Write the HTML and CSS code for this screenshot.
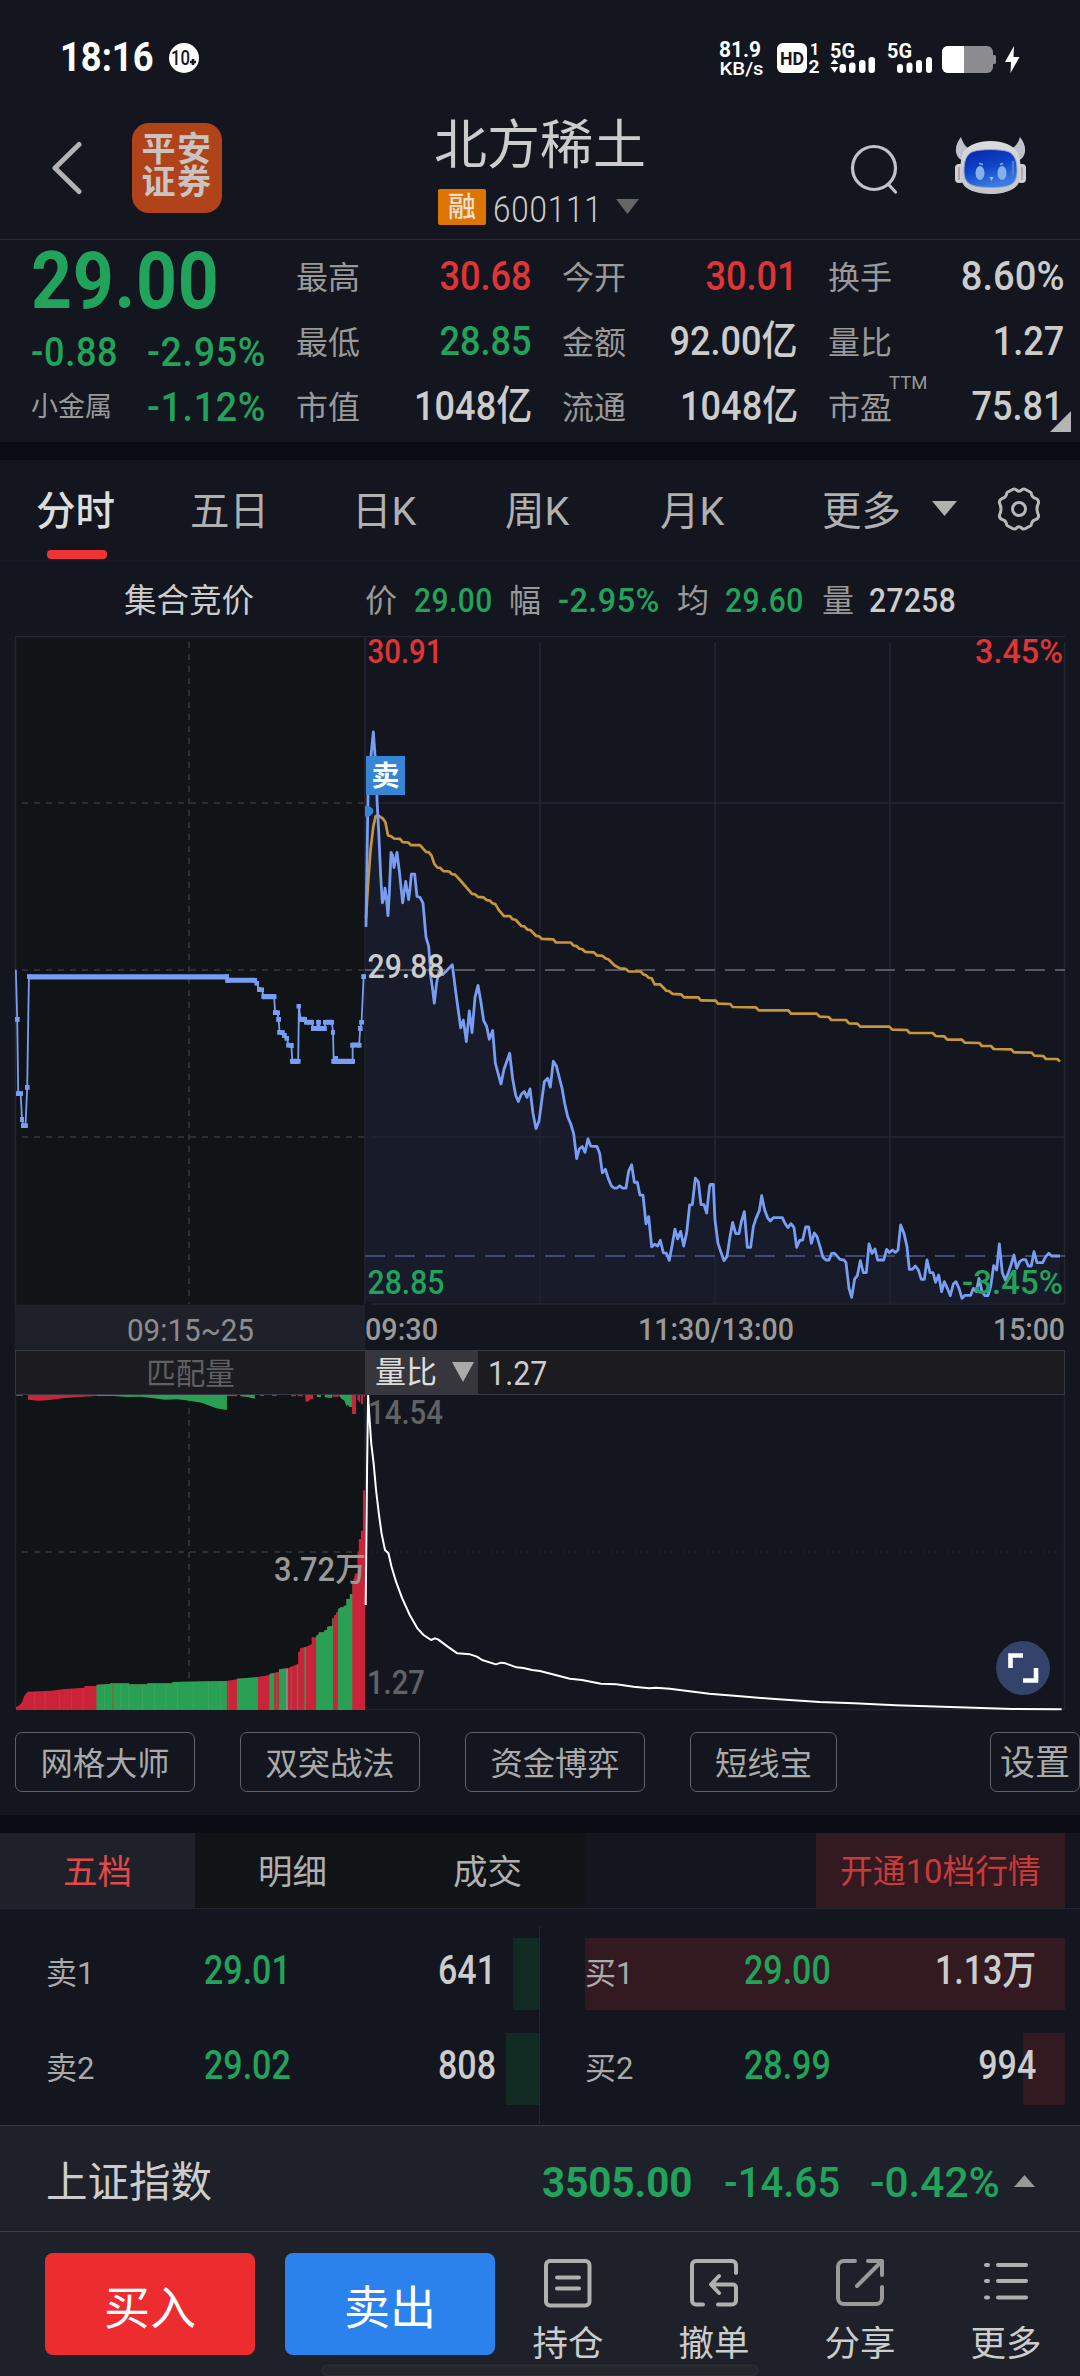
FILE: index.html
```html
<!DOCTYPE html>
<html lang="zh-CN">
<head>
<meta charset="utf-8">
<title>北方稀土 600111</title>
<link rel="stylesheet" href="styles.css">
</head>
<body>
<div class="status">
  <span class="clock">18:16</span>
  <svg class="badge10" width="30" height="30" viewBox="0 0 30 30"><circle cx="15" cy="15" r="15" fill="#fff"/><text x="2" y="22" font-size="20" font-weight="500" textLength="19" lengthAdjust="spacingAndGlyphs" fill="#13161f">10</text><path d="M24 16v6M21 19h6" stroke="#13161f" stroke-width="2.6"/></svg>
  <svg class="sysicons" width="310" height="44" viewBox="714 36 310 44" fill="#fff">
    <g font-weight="700">
      <text x="719" y="57" font-size="22.500" textLength="42" lengthAdjust="spacingAndGlyphs">81.9</text>
      <text x="719.500" y="75" font-size="19" font-weight="500" textLength="44" lengthAdjust="spacingAndGlyphs">KB/s</text>
      <text x="830" y="58" font-size="20.500" textLength="25" lengthAdjust="spacingAndGlyphs">5G</text>
      <text x="887" y="58" font-size="20.500" textLength="25" lengthAdjust="spacingAndGlyphs">5G</text>
      <text x="810" y="55" font-size="16">1</text>
      <text x="808.500" y="72.500" font-size="17.500" textLength="11" lengthAdjust="spacingAndGlyphs">2</text>
    </g>
    <rect x="777" y="43" width="30" height="30" rx="6"/>
    <text x="780" y="65" font-size="19" font-weight="700" fill="#13161f" textLength="24" lengthAdjust="spacingAndGlyphs">HD</text>
    <g>
      <path d="M830.500 64l4-5 4 5zM830.500 67h8l-4 5.500z"/>
      <rect x="839.500" y="64" width="6.500" height="9" rx="3"/><rect x="849" y="62.500" width="6.500" height="10.500" rx="3"/><rect x="859" y="60" width="6.500" height="13" rx="3"/><rect x="868.500" y="57" width="6.500" height="16" rx="3"/>
      <rect x="897" y="64" width="6" height="9" rx="3"/><rect x="906.500" y="62.500" width="6" height="10.500" rx="3"/><rect x="916" y="60" width="6" height="13" rx="3"/><rect x="926" y="57" width="6" height="16" rx="3"/>
    </g>
    <rect x="942" y="46" width="51" height="27" rx="6" fill="#8b8b90"/><rect x="992" y="55" width="4" height="9" rx="1.500" fill="#8b8b90"/>
    <path d="M948 46h16v27h-16a6 6 0 0 1-6-6v-15a6 6 0 0 1 6-6z"/>
    <path d="M1014 46l-9 16h6l-.5 11 9-16h-6z"/>
  </svg>
</div>

<header class="head">
  <div class="head-left">
    <svg width="32" height="56" viewBox="50 140 32 56" fill="none" stroke="#b3b3b3" stroke-width="5" stroke-linecap="round" stroke-linejoin="round"><path d="M79 144.500L55 168l24 23.500"/></svg>
    <div class="logo">平安<br>证券</div>
  </div>
  <div class="head-title">
    <h1>北方稀土</h1>
    <div class="code"><b>融</b><span>600111</span><svg width="23" height="15" viewBox="0 0 23 15"><path d="M0 0h23L11.500 15z" fill="#666"/></svg></div>
  </div>
  <div class="head-right">
    <svg width="50" height="52" viewBox="849 143 50 52" fill="none" stroke="#c0c3ca" stroke-width="3.200" stroke-linecap="round"><circle cx="874" cy="168" r="21.500"/><path d="M889 185l6.500 7"/></svg>
    <svg class="robot" width="74" height="60" viewBox="0 0 74 60">
      <defs><linearGradient id="face" x1="0" y1="0" x2=".4" y2="1"><stop offset="0" stop-color="#0b22a8"/><stop offset=".55" stop-color="#0d46c8"/><stop offset="1" stop-color="#3b7be0"/></linearGradient>
      <linearGradient id="shell" x1="0" y1="0" x2="0" y2="1"><stop offset="0" stop-color="#dcdcdd"/><stop offset="1" stop-color="#c3c4c8"/></linearGradient></defs>
      <path d="M7 1C2 7 0 15 4 21c2 3 5 4 8 3l8-9C13 13 9 8 7 1zM66 1c5 6 7 14 3 20-2 3-5 4-8 3l-8-9c7-2 11-7 13-14z" fill="#bfc2cd"/>
      <rect x="1" y="28" width="9" height="19" rx="4" fill="#d0cfd2"/><rect x="63" y="28" width="9" height="19" rx="4" fill="#d0cfd2"/>
      <path d="M5 31v13M68 31v13" stroke="#a08a8c" stroke-width="1.200"/>
      <path d="M9 17C17 1 56 1 64 17c3 9 4 20 1 29-5 16-52 16-57 0-3-9-2-20 1-29z" fill="url(#shell)"/>
      <path d="M19 15.500c8-2.500 27-2.500 35 0 7 3 9 10 9 19 0 13-5 17-26 17s-27-4-27-17c0-9 2-16 9-19z" fill="url(#face)" stroke="#8fa6cf" stroke-width="1"/>
      <ellipse cx="26" cy="37" rx="4.500" ry="7" fill="#86b0ea"/><ellipse cx="48" cy="37" rx="4.500" ry="7" fill="#86b0ea"/>
      <path d="M35.500 41h4l-2 4z" fill="#9cc0ee"/><path d="M25 27.500l4 1M46 28.500l3-1" stroke="#86b0ea" stroke-width="1.500"/><path d="M59 25v14" stroke="#5a78d0" stroke-width="2"/>
    </svg>
  </div>
</header>

<section class="quote">
  <div class="price">
    <div class="last down"><span class="n">29.00</span></div>
    <div class="chg down"><span class="n">-0.88</span><span class="n pct">-2.95%</span></div>
    <div class="chg sector"><span>小金属</span><span class="n pct down">-1.12%</span></div>
  </div>
  <dl class="stats">
    <div><dt>最高</dt><dd class="up">30.68</dd></div><div><dt>今开</dt><dd class="up">30.01</dd></div><div><dt>换手</dt><dd class="pct">8.60%</dd></div>
    <div><dt>最低</dt><dd class="down">28.85</dd></div><div><dt>金额</dt><dd>92.00亿</dd></div><div><dt>量比</dt><dd>1.27</dd></div>
    <div><dt>市值</dt><dd>1048亿</dd></div><div><dt>流通</dt><dd>1048亿</dd></div><div><dt>市盈<sup>TTM</sup></dt><dd>75.81</dd></div>
  </dl>
  <svg class="corner" width="21" height="21"><path d="M21 0v21H0z" fill="#b5b5b5"/></svg>
</section>

<nav class="tabs">
  <a class="on">分时</a><a>五日</a><a>日K</a><a>周K</a><a>月K</a><a>更多</a>
  <svg width="25" height="15" viewBox="0 0 25 15"><path d="M0 0h25L12.500 15z" fill="#b0b0b0"/></svg>
  <svg width="44" height="46" viewBox="-22 -23 44 46" fill="none" stroke="#b8b8b8" stroke-width="3" stroke-linejoin="round"><path d="M-6.500 -19.500Q-4 -21 -2 -18.500Q0 -17 2 -18.500Q4 -21 6.500 -19.500L12 -16.500Q13 -11 17 -10.500Q20 -9 19.500 -6Q16.500 0 19.500 6Q20 9 17 10.500Q13 11 12 16.500L6.500 19.500Q4 21 2 18.500Q0 17 -2 18.500Q-4 21 -6.500 19.500L-12 16.500Q-13 11 -17 10.500Q-20 9 -19.500 6Q-16.500 0 -19.500 -6Q-20 -9 -17 -10.500Q-13 -11 -12 -16.500Z"/><circle r="6.500"/></svg>
</nav>

<div class="info">
  <strong>集合竞价</strong>
  <span>价</span><b class="down">29.00</b><span>幅</span><b class="down pct">-2.95%</b><span>均</span><b class="down">29.60</b><span>量</span><b>27258</b>
</div>

<svg class="chart" width="1080" height="714" viewBox="0 636 1080 714">
  <defs>
    <marker id="tick" markerUnits="userSpaceOnUse" markerWidth="14" markerHeight="11" refX="7" refY="5.500"><rect width="14" height="11" fill="#789df2"/></marker>
  </defs>
  <rect x="16" y="637" width="348" height="667" fill="#101417"/>
  <g fill="none" stroke="#242732" stroke-width="1.500">
    <path d="M15.500 1350V636.500H1065M371 636.500H1065M371 803H1064M371 1137H1064M371 1304H1065"/>
    <path d="M365 637V1304M540 642V1304M715 642V1304M890 642V1304M1064.500 642V1304"/>
  </g>
  <g fill="none" stroke="#343742" stroke-width="1.600">
    <path d="M22 803H364M22 970H364M22 1137H364" stroke-dasharray="6 6"/><path d="M189 642V1304" stroke-dasharray="6 6"/>
  </g>
  <g transform="translate(360 630) scale(.33333 .44643)" fill="#171b2a">
    <path d="M18 1505V665L24 370 40 228 52 395 67 611 75 578 84 640 93 498 102 532 111 498 128 611 137 563 146 604 154 547 164 547 171 597 180 599 189 612 198 688 206 708 213 780 223 836 237 765 248 772 277 750 288 815 302 891 310 874 319 922 328 853 336 902 345 823 354 796 371 875 388 917 398 897 406 970 423 1017 432 984 449 948 467 1042 475 1056 493 1034 501 1047 510 1028 519 1083 528 1117 537 1100 553 1012 563 1004 571 1024 580 966 589 976 606 1026 623 1090 641 1128 650 1184 667 1157 675 1170 684 1140 692 1156 711 1157 719 1172 727 1216 736 1208 762 1250 798 1250 806 1212 815 1198 823 1237 832 1237 840 1266 849 1266 858 1330 866 1314 875 1382 901 1367 910 1395 928 1412 945 1342 953 1364 962 1347 971 1380 989 1288 997 1287 1006 1228 1015 1236 1023 1287 1040 1306 1049 1244 1060 1244V1505Z"/>
  </g>
  <path transform="translate(700 900) scale(.33333)" fill="#171b2a" d="M38 1210V853L40 853 45 960 54 1030 72 1082 81 1070 98 967 107 1001 117 1001 133 935 142 1042 152 1042 160 980 178 932 185 887 203 954 220 953 247 953 264 983 282 983 290 1042 308 1020 317 981 326 981 334 1030 343 999 369 1072 387 1080 395 1060 432 1080 438 1088 447 1165 455 1192 464 1137 481 1082 490 1118 499 1118 507 1032 516 1060 533 1080 551 1080 560 1048 594 1050 602 975 621 1040 628 1108 646 1098 664 1138 673 1138 681 1080 690 1118 725 1175 751 1187 768 1145 786 1195 812 1186 837 1135 855 1187 864 1187 881 1097 890 1110 898 1032 907 1118 916 1140 942 1065 950 1105 968 1079 994 1098 1002 1055 1011 1088 1028 1088 1046 1060 1055 1068 1080 1068V1210Z"/>
  <g fill="none" stroke="#242732" stroke-width="1.500" opacity=".8"><path d="M540 1000V1304M715 1200V1304M890 1250V1304M371 1137H560"/></g>
  <path d="M365 970H1065" fill="none" stroke="#54575f" stroke-width="1.800" stroke-dasharray="20 10"/>
  <path d="M365 1256H1065" fill="none" stroke="#3d4b78" stroke-width="1.800" stroke-dasharray="20 10"/>

  <g fill="none" stroke="#c8953a" stroke-width="2.700" stroke-linejoin="round">
    <polyline vector-effect="non-scaling-stroke" transform="translate(360 630) scale(.33333 .44643)" points="18,645 25,560 32,490 40,440 47,417 54,415 68,422 76,430 84,460 93,462 102,467 120,468 128,475 145,476 153,482 180,482 198,497 207,498 215,506 223,524 232,532 241,533 250,540 268,541 276,547 285,548 300,560 336,591 345,592 354,598 371,599 380,605 389,606 397,612 406,614 416,627 432,641 450,641 458,648 467,649 484,663 493,664 502,671 511,672 528,685 537,686 546,692 580,693 588,700 632,700 641,707 650,708 658,714 667,715 676,721 702,722 711,729 728,730 737,736 746,738 763,751 780,758 797,759 806,765 842,765 851,772 858,773 866,779 875,780 884,794 901,794 919,808 928,809 937,815 963,816 972,823 1015,823 1021,829"/>
    <polyline vector-effect="non-scaling-stroke" transform="translate(700 900) scale(.33333)" points="0,301 47,302 54,311 91,312 98,321 168,322 176,331 265,331 273,341 350,341 359,350 386,351 394,360 438,360 447,370 472,371 481,380 568,380 577,389 621,390 629,399 698,399 707,408 733,409 742,419 786,419 794,428 838,429 846,438 873,438 881,447 934,448 942,457 995,458 1003,467 1030,468 1038,477 1072,477 1080,485"/>
  </g>
  <g fill="none" stroke="#789df2" stroke-width="2.800" stroke-linejoin="round">
    <polyline vector-effect="non-scaling-stroke" transform="translate(360 630) scale(.33333 .44643)" points="18,665 24,370 33,282 40,228 47,300 52,395 56,450 62,550 67,611 72,600 75,578 79,598 84,640 88,590 93,498 98,505 102,532 106,518 111,498 118,540 128,611 137,563 146,604 150,580 154,547 164,547 171,597 180,599 189,612 198,688 206,708 213,780 217,800 223,836 230,790 237,765 248,772 277,750 288,815 302,891 310,874 319,922 328,853 336,902 345,823 354,796 362,830 371,875 380,888 388,917 398,897 406,970 423,1017 432,984 449,948 458,1005 467,1042 475,1056 484,1040 493,1034 501,1047 510,1028 519,1083 528,1117 537,1100 546,1050 553,1012 563,1004 571,1024 580,966 589,976 597,1000 606,1026 614,1060 623,1090 632,1106 641,1128 650,1184 658,1162 667,1157 675,1170 684,1140 692,1156 711,1157 719,1172 727,1216 736,1208 745,1229 754,1245 762,1250 771,1250 779,1245 788,1250 798,1250 806,1212 815,1198 823,1237 832,1237 840,1266 849,1266 858,1330 866,1314 875,1382 884,1376 893,1380 901,1367 910,1395 919,1396 928,1412 936,1380 945,1342 953,1364 962,1347 971,1380 980,1350 989,1288 997,1287 1006,1228 1015,1236 1023,1287 1032,1287 1040,1306 1049,1244 1060,1243"/>
    <polyline vector-effect="non-scaling-stroke" transform="translate(700 900) scale(.33333)" points="28,853 40,853 45,960 54,1030 63,1057 72,1082 81,1070 90,1010 98,967 107,1001 117,1001 124,965 133,935 142,1042 152,1042 160,980 168,955 178,932 185,887 194,930 203,954 211,963 220,953 247,953 255,970 264,983 273,971 282,983 290,1042 299,1021 308,1020 317,981 326,981 334,1030 343,999 351,1010 360,1040 369,1072 378,1080 387,1080 395,1060 404,1060 420,1078 432,1080 438,1088 447,1165 455,1192 464,1137 472,1127 481,1082 490,1118 499,1118 507,1032 516,1060 525,1047 533,1080 551,1080 560,1048 568,1058 577,1050 586,1057 594,1050 602,975 612,1000 621,1040 628,1108 637,1108 646,1098 655,1110 664,1138 673,1138 681,1080 690,1118 699,1118 707,1147 716,1125 725,1175 733,1145 742,1165 751,1187 760,1152 768,1145 777,1165 786,1195 795,1186 812,1186 820,1165 829,1175 837,1135 846,1175 855,1187 864,1187 872,1160 881,1097 890,1110 898,1032 907,1118 916,1140 925,1118 933,1095 942,1065 950,1105 959,1085 968,1079 977,1079 985,1098 994,1098 1002,1055 1011,1088 1028,1088 1037,1070 1046,1060 1055,1068 1080,1068"/>
  </g>
  <g transform="translate(0 630) scale(.34436 .45914)" fill="none" stroke="#789df2">
    <polyline vector-effect="non-scaling-stroke" stroke-width="1.800" marker-mid="url(#tick)" points="46,740 50,848 53,1010 60,1010 64,1066 68,1080 74,1080 79,996 84,755 659,755 661,763 740,763 746,769 752,783 760,784 766,798 796,799 799,833 806,834 809,848 812,876 820,877 826,883 833,889 838,904 846,905 849,939 866,939 868,819 873,848 885,848 890,854 906,854 909,868 920,868 925,854 930,868 942,868 945,854 964,854 967,876 969,939 975,933 980,939 1024,939 1024,904 1043,904 1046,868 1050,854 1056,755 1057,754"/>
    <path stroke-width="11" d="M84 755.500H660M660 763H741M762 798.500H799M845 939.500H868M872 848H887M890 854.500H908M905 868H944M944 854.500H966M966 939.500H1028M1020 904H1046"/>
  </g>
  <path d="M365 806a7 6 0 0 1 8.500 5a7 6 0 0 1-8.500 5.500z" fill="#3786d6"/>
  <rect x="366" y="756" width="39" height="39" fill="#3786d6"/>
  <text class="cjk" x="371.500" y="786" font-size="28" font-weight="700" fill="#fff">卖</text>
  <g font-size="32.500" font-weight="500">
    <text x="367.500" y="663" fill="#e03436" textLength="75" lengthAdjust="spacingAndGlyphs">30.91</text>
    <text x="975" y="663" fill="#e03436" textLength="88" lengthAdjust="spacingAndGlyphs">3.45%</text>
    <text x="367.500" y="978" fill="#ccc" textLength="77" lengthAdjust="spacingAndGlyphs">29.88</text>
    <text x="367.500" y="1294" fill="#21a35b" textLength="77" lengthAdjust="spacingAndGlyphs">28.85</text>
    <text x="962" y="1294" fill="#21a35b" textLength="101" lengthAdjust="spacingAndGlyphs">-3.45%</text>
  </g>
  <rect x="15" y="1305" width="350" height="45" fill="#1f212a"/>
  <g font-size="30.500" font-weight="500" fill="#999">
    <text x="127" y="1341" font-size="31" font-weight="400" fill="#8c8c8e" textLength="127" lengthAdjust="spacingAndGlyphs">09:15~25</text>
    <text x="365" y="1340" textLength="73" lengthAdjust="spacingAndGlyphs">09:30</text>
    <text x="638" y="1340" textLength="156" lengthAdjust="spacingAndGlyphs">11:30/13:00</text>
    <text x="993" y="1340" textLength="72" lengthAdjust="spacingAndGlyphs">15:00</text>
  </g>
</svg>

<div class="indicator">
  <span class="match">匹配量</span>
  <span class="pick">量比<svg width="22" height="20"><path d="M0 0h22L11 20z" fill="#aaa"/></svg></span>
  <span class="val">1.27</span>
</div>

<svg class="volume" width="1080" height="320" viewBox="0 1395 1080 320">
  <defs><clipPath id="bars"><path d="M46 1230V1222L57 1215 64 1207 70 1188 80 1175 150 1172 180 1168 245 1163V1158H280V1154L320 1152V1150H375V1153H428V1150H500V1146L657 1143 688 1138V1136L749 1131 782 1125V1122L796 1119 810 1115V1108L836 1105 844 1101 863 1093H866V1055H871V1045L885 1042 905 1033V1012H918V1008L926 1002V997H942V990H950V980L965 978V955H970V945H976V937H981V928L990 922H998V917H1006V897H1016V882H1023V850L1032 820H1038V755H1042V717H1048V692H1054V571H1060V1230Z"/></clipPath></defs>
  <rect x="16" y="1395" width="348" height="314" fill="#101417"/>
  <g fill="none" stroke="#21242e" stroke-width="1.500"><path d="M15.500 1395V1709M365 1395V1709M365 1709.500H1064.500V1395"/><path d="M371 1552H1064" stroke-dasharray="1 5" stroke="#2a2d38"/></g>
  <g fill="none" stroke="#343742" stroke-width="1.600" stroke-dasharray="6 6"><path d="M22 1552H364M189 1396V1709"/></g>
  <g transform="translate(0 1300) scale(.34436 .33333)">
    <g clip-path="url(#bars)">
      <rect x="40" y="500" width="1020" height="730" fill="#cb2339"/>
      <path fill="#2aa054" d="M280 500h379v730h-379zM688 500h61v730h-61zM782 500h14v730h-14zM810 500h20v730h-20zM884 500h4v730h-4zM918 500h49v730h-49zM981 500h42v730h-42z"/>
      <path fill="#8a8a8a" d="M830 500h6v730h-6z"/><path fill="#7d6a3e" d="M326 500h4v730h-4zM802 500h3v730h-3zM844 500h3v730h-3zM862 500h4v730h-4z"/>
    </g>
    <path fill="#cb2339" d="M47 284h20v4h-20zM81 285H280V288L230 291 180 295 145 300 110 302 81 299zM659 285h30v4h-30zM755 285h12v3h-12zM790 285h14v3h-14zM845 285h14v4h-14zM865 285h14v4h-14zM886 285H909V296L900 299 897 303 888 306zM966 285h18v5h-18zM1022 285h12v57h-12zM1038 285h4v16h-4zM1042 285h4v22h-4zM1048 285h6v28h-6zM1056 285h4v6h-4z"/>
    <path fill="#2aa054" d="M280 285H659V330L628 325 605 316 585 308 550 302 515 298 480 299 440 294 410 290 370 291 330 288 280 288zM698 285H740V296L720 291 698 289zM920 285h12v6h-12zM943 285H965V294L943 292zM984 285H1022V321H1015L1010 314 1006 318 1000 302 990 295z"/>
    <g fill="#57b377" opacity=".45"><rect x="302" y="1153" width="2" height="77"/><rect x="350" y="1152" width="2" height="78"/><rect x="373" y="1153" width="2" height="77"/><rect x="413" y="1154" width="2" height="76"/><rect x="447" y="1152" width="2" height="78"/><rect x="481" y="1152" width="2" height="78"/><rect x="515" y="1148" width="2" height="82"/><rect x="560" y="1147" width="2" height="83"/><rect x="605" y="1146" width="2" height="84"/><rect x="640" y="1146" width="2" height="84"/></g>
    <g fill="#e0506a" opacity=".4"><rect x="100" y="1176" width="2" height="54"/><rect x="130" y="1176" width="2" height="54"/><rect x="172" y="1172" width="2" height="58"/><rect x="206" y="1168" width="2" height="62"/><rect x="240" y="1166" width="2" height="64"/><rect x="663" y="1142" width="2" height="88"/></g>
  </g>
  <g font-size="32.500" font-weight="500" fill="#626264">
    <text x="274" y="1580.500" fill="#999" textLength="92" lengthAdjust="spacingAndGlyphs">3.72万</text>
    <text x="368" y="1424" textLength="75" lengthAdjust="spacingAndGlyphs">14.54</text>
    <text x="367" y="1694" textLength="58" lengthAdjust="spacingAndGlyphs">1.27</text>
  </g>
  <polyline fill="none" stroke="#fff" stroke-width="2" stroke-linejoin="round" vector-effect="non-scaling-stroke" transform="translate(0 1300) scale(.34436 .33333)" points="1062,915 1066,500 1069,287 1072,340 1078,430 1085,490 1092,570 1100,640 1108,700 1118,750 1128,760 1137,800 1150,845 1168,895 1190,945 1212,985 1230,1005 1252,1020 1263,1015 1272,1018 1300,1040 1328,1060 1365,1063 1385,1070 1400,1080 1440,1093 1455,1088 1468,1090 1500,1102 1520,1104 1545,1110 1568,1113 1610,1124 1655,1136 1690,1140 1745,1151 1790,1153 1840,1160 1885,1165 1905,1163 1945,1166 2060,1181 2150,1189 2250,1197 2380,1206 2480,1210 2600,1216 2760,1221 2940,1227 3083,1228"/>
  <circle cx="1023" cy="1668" r="27" fill="#34436c"/>
  <path d="M1010.500 1668v-12.500h12.500M1036 1668v12.500h-13" fill="none" stroke="#fff" stroke-width="4.600"/>
</svg>

<div class="chips"><a>网格大师</a><a>双突战法</a><a>资金博弈</a><a class="short">短线宝</a><a class="set">设置</a></div>

<div class="booktabs"><a class="on">五档</a><a>明细</a><a>成交</a><a class="open">开通10档行情</a></div>

<section class="book">
  <div class="side sell">
    <div class="row"><span class="lv">卖1</span><span class="p">29.01</span><span class="q">641</span><i class="b1"></i></div>
    <div class="row"><span class="lv">卖2</span><span class="p">29.02</span><span class="q">808</span><i class="b2"></i></div>
  </div>
  <div class="side buy">
    <div class="row full"><span class="lv">买1</span><span class="p">29.00</span><span class="q">1.13万</span></div>
    <div class="row part"><span class="lv">买2</span><span class="p">28.99</span><span class="q">994</span></div>
  </div>
</section>

<div class="index">
  <span class="name">上证指数</span>
  <b class="i1">3505.00</b><span class="i2">-14.65</span><span class="i3">-0.42%</span>
  <svg width="21" height="12"><path d="M0 12h21L10.500 0z" fill="#999"/></svg>
</div>

<footer class="actions">
  <a class="btn buy-btn">买入</a><a class="btn sell-btn">卖出</a>
  <a class="act"><svg width="50" height="50" viewBox="0 0 50 50"><rect x="3" y="3" width="43.500" height="44.500" rx="4"/><path d="M14 19.500h22M14 30.500h22"/></svg>持仓</a>
  <a class="act"><svg width="50" height="50" viewBox="0 0 50 50"><path d="M14 46.500H7a4 4 0 0 1-4-4V7a4 4 0 0 1 4-4h36a4 4 0 0 1 4 4v8M30 18l-8 8.500 8 8.500M23 26.500h21a3 3 0 0 1 3 3v13a4 4 0 0 1-4 4H29"/></svg>撤单</a>
  <a class="act dim"><svg width="50" height="50" viewBox="0 0 50 50"><path d="M20 3H9a6 6 0 0 0-6 6v31a6 6 0 0 0 6 6h32a6 6 0 0 0 6-6V29M33 3h14v14M47 3L22 28"/></svg>分享</a>
  <a class="act"><svg width="50" height="50" viewBox="0 0 50 50"><path d="M5 7h2M5 23h2M5 39.500h2M17 7h28M17 23h28M17 39.500h28"/></svg>更多</a>
  <div class="homebar"></div>
</footer>
</body>
</html>
```

FILE: styles.css
```css
* { box-sizing: border-box; }
body {
  margin: 0;
  width: 1080px;
  height: 2376px;
  overflow: hidden;
  background: #13161f;
  color: #ccc;
  font-family: Roboto, "Noto Sans CJK SC", sans-serif;
}
svg { display: block; flex: none; }
.up { color: #e03436; }
.down { color: #21a35b; }
.cjk { font-family: "Noto Sans CJK SC", sans-serif; }

/* system status */
.status { display: flex; align-items: center; height: 115px; padding-left: 60px; color: #fff; }
.clock { width: 109px; font-size: 41px; font-weight: 700; line-height: 115px; transform: scaleX(.885); transform-origin: left; }
.badge10 { margin-right: 515px; }

/* title bar */
.head { display: grid; grid-template-columns: 1fr 220px 1fr; height: 125px; border-bottom: 1.5px solid #282a35; }
.head-left { display: flex; align-items: center; gap: 50px; padding: 0 0 18px 50px; }
.logo {
  width: 90px; height: 90px; padding-top: 10px; border-radius: 17px; background: #b1431b;
  color: #c9c4c2; font-size: 34px; font-weight: 700; line-height: 33px; letter-spacing: 1.5px; text-align: center;
}
.head-title { text-align: center; }
.head-title h1 { margin: 0; font-size: 53px; font-weight: 400; line-height: 63px; white-space: nowrap; }
.code { display: flex; align-items: center; height: 58px; padding: 0 0 1px 8px; }
.code b { width: 48px; height: 36px; border-radius: 2px; background: #dd7504; color: #eaded2; font-size: 28px; font-weight: 500; line-height: 37px; }
.code span { width: 122px; margin-left: 7px; text-align: left; font-size: 36.500px; font-weight: 300; letter-spacing: 1px; transform: scaleX(.86); transform-origin: left; margin-top: 5px; }
.code svg { margin-left: 1px; }
.head-right { display: flex; align-items: center; padding: 0 0 16px 199px; }
.robot { margin-left: 55px; margin-top: -6px; }

/* quote summary */
.quote { position: relative; display: flex; height: 202px; padding: 3px 17px 0 31px; }
.price { width: 265px; }
.n { display: inline-block; transform: scaleX(.88); transform-origin: left; letter-spacing: .8px; }
.n.pct { transform: scaleX(.915); }
.last { height: 77px; font-size: 79px; font-weight: 700; line-height: 77px; }
.last .n { transform: scaleX(.905); }
.chg { display: grid; grid-template-columns: 116px 1fr; height: 65px; font-size: 41px; font-weight: 500; line-height: 64px; }
.sector { height: 45px; line-height: 45px; }
.sector span:first-child { color: #999; font-size: 27px; font-weight: 400; }
.stats { display: grid; grid-template-columns: repeat(3, 235px); grid-auto-rows: 65px; column-gap: 31px; margin: 0; padding-left: 0; }
.stats div { display: flex; justify-content: space-between; line-height: 67px; }
.stats dt { position: relative; color: #999; font-size: 32px; line-height: 70px; }
.stats dd { margin: 0 -1px 0 0; font-size: 41px; font-weight: 500; transform: scaleX(.88); transform-origin: right; white-space: nowrap; }
.stats dd.pct { transform: scaleX(.93); }
.stats sup { position: absolute; left: 61px; top: -1px; font-size: 18.500px; line-height: 22px; }
.corner { position: absolute; left: 1050px; top: 171px; }

/* period tabs */
.tabs {
  display: grid; grid-template-columns: 154px 162px 153px 155px 162px 110px 63px 44px; align-items: start;
  height: 119px; padding: 24px 0 0 36px; border-top: 18px solid #0b0b14; border-bottom: 1px solid #171a24;
}
.tabs a { display: block; height: 94px; font-size: 39.500px; line-height: 56px; color: #b0b0b0; }
.tabs .on { color: #ddd; font-weight: 500; }
.tabs .on::after { content: ""; display: block; width: 60px; height: 9px; margin: 10px 0 0 11px; border-radius: 4px; background: #ee3434; }
.tabs svg:nth-of-type(1) { margin: 17px 0 0 0; }
.tabs svg:nth-of-type(2) { margin: 2px 0 0 2px; }

.info {
  display: grid; grid-template-columns: 241px 49px 95px 49px 119px 48px 97px 47px 120px;
  height: 75px; padding-left: 124px; font-size: 32px; line-height: 81px;
}
.info strong { font-size: 32.500px; font-weight: 400; }
.info span { color: #999; }
.info b { font-size: 32.500px; font-weight: 500; letter-spacing: .5px; transform: scaleX(.92); transform-origin: left; white-space: nowrap; }
.info b.pct { transform: scaleX(.995); }

/* indicator strip */
.indicator { display: flex; height: 45px; margin: 0 15px; border: 1.500px solid #353945; background: #1b1b20; line-height: 45px; font-size: 31px; }
.match { width: 350px; border-right: 1px solid #353945; color: #606062; font-size: 29.500px; line-height: 46px; text-align: center; }
.pick { display: flex; justify-content: space-between; align-items: center; width: 112px; padding: 0 4px 0 9px; background: #36363c; color: #ddd; }
.pick svg { margin-top: -2px; }
.val { padding-left: 11px; font-size: 33px; transform: scaleX(.92); transform-origin: left; }

/* strategy chips */
.chips { display: flex; gap: 45px; height: 100px; padding: 17px 0 0 15px; }
.chips a { flex: none; width: 180px; height: 60px; border: 1.500px solid #5f6066; border-radius: 7px; color: #aaa; font-size: 32.300px; line-height: 62px; text-align: center; }
.chips .short { width: 147px; }
.chips .set { width: 90px; margin-left: 108px; font-size: 35px; }

/* order book */
.booktabs { display: flex; height: 94px; border-top: 18px solid #0b0b14; border-bottom: 1.500px solid #242731; }
.booktabs a { width: 195px; background: #111417; color: #b0b0b0; font-size: 34.500px; line-height: 79px; text-align: center; }
.booktabs .on { background: #1f212a; color: #e24a4a; }
.booktabs .open { width: 249px; margin-left: 231px; background: #331a21; color: #c93a3a; font-size: 32.800px; }
.book { display: grid; grid-template-columns: 540px 1fr; height: 216px; padding-top: 17px; }
.side { padding-top: 12px; }
.sell { border-right: 1.500px solid #242731; padding-left: 46px; }
.buy { padding: 12px 15px 0 45px; }
.row { display: grid; height: 72px; margin-bottom: 23px; line-height: 66px; }
.lv { color: #aaa; font-size: 31px; line-height: 71px; }
.p, .q { font-size: 40px; font-weight: 500; transform: scaleX(.85); transform-origin: left; white-space: nowrap; }
.p { color: #21a35b; }
.q { color: #ccc; }
.sell .row { grid-template-columns: 158px 234px 1fr auto; }
.row i { height: 72px; background: #112a22; }
.b1 { width: 26px; }
.b2 { width: 33px; }
.buy .row { grid-template-columns: 159px 1fr auto; padding-right: 29px; }
.buy .q { transform-origin: right; }
.full { background: #331a21; }
.part { background: linear-gradient(#331a21, #331a21) right / 42px 100% no-repeat; }

/* index ticker */
.index { display: grid; grid-template-columns: 496px 182px 146px 144px 21px; align-items: center; height: 106px; padding-left: 46px; border-top: 1.500px solid #393c44; background: #1e2129; color: #21a35b; font-size: 42px; line-height: 104px; }
.index .name { color: #ccc; font-size: 41.500px; margin-top: 5px; }
.index b, .index span { white-space: nowrap; transform-origin: left; }
.index b, .i2, .i3 { margin-top: 4px; }
.i1 { font-weight: 700; transform: scaleX(.96); }
.i2, .i3 { font-weight: 500; transform: scaleX(.955); }
.index .i3 { transform: scaleX(1.01); }

/* action bar */
.actions { position: relative; display: flex; height: 146px; padding: 21px 0 0 45px; border-top: 1.500px solid #393c44; background: #1e2129; }
.btn { width: 210px; height: 102px; margin-right: 30px; border-radius: 8px; color: #fff; font-size: 46px; line-height: 110px; text-align: center; }
.buy-btn { background: #ed2c2f; }
.sell-btn { background: #2c82ec; }
.act { display: flex; flex-direction: column; align-items: center; width: 146px; padding-top: 5px; font-size: 35.500px; line-height: 72px; }
.act:nth-child(3) { margin-left: -30px; }
.act svg { fill: none; stroke: #b0b0b0; stroke-width: 4; stroke-linecap: round; stroke-linejoin: round; }
.dim svg { stroke: #999; }
.homebar { position: absolute; left: 323px; top: 134px; width: 434px; height: 9px; border-radius: 5px; background: #24272b; box-shadow: 0 0 2px 1px #33363c; }
```
